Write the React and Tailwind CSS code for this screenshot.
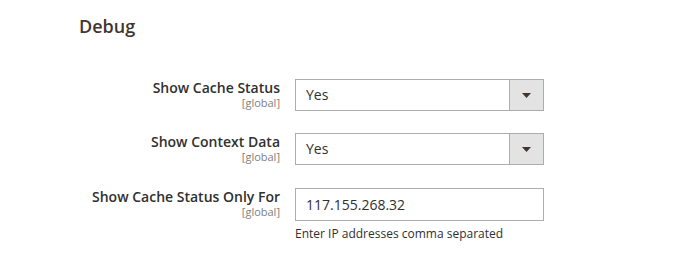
import { useState } from 'react';

const rows = [
  { label: 'Show Cache Status', type: 'select', value: 'Yes' },
  { label: 'Show Context Data', type: 'select', value: 'Yes' },
  { label: 'Show Cache Status Only For', type: 'text', value: '117.155.268.32', note: 'Enter IP addresses comma separated' },
];

function SelectBox({ value }) {
  return (
    <div className="flex h-[32px] w-[249px] border border-[#adadad] bg-white">
      <div className="flex-1 pl-[10px] text-[14px] leading-[30px] text-[#303030]">{value}</div>
      <div className="flex w-[34px] items-center justify-center border-l border-[#adadad] bg-[#e3e3e3]">
        <svg width="9" height="5" viewBox="0 0 9 5">
          <path d="M0 0h9L4.5 5z" fill="#41362f" />
        </svg>
      </div>
    </div>
  );
}

export default function App() {
  const [ips, setIps] = useState('117.155.268.32');

  return (
    <div className="h-[265px] w-[685px] bg-white" style={{ fontFamily: '"Open Sans", sans-serif' }}>
      <h2 className="pl-[79px] pt-[14px] text-[18px] font-semibold leading-[24px] text-[#41362f]">Debug</h2>

      <div className="mt-[41px] flex flex-col gap-[22px]">
        {rows.map((row) => (
          <div key={row.label} className={row.type === 'text' ? 'mt-[1px] flex' : 'flex'}>
            <div className="w-[280px] text-right">
              <div className="text-[14px] font-semibold leading-[18px] text-[#303030]">{row.label}</div>
              <div className="text-[11px] leading-[12px] text-[#808080]">[global]</div>
            </div>
            <div className="ml-[15px]">
              {row.type === 'select' ? (
                <SelectBox value={row.value} />
              ) : (
                <>
                  <input
                    value={ips}
                    onChange={(e) => setIps(e.target.value)}
                    className="block h-[33px] w-[249px] border border-[#adadad] bg-white pl-[10px] text-[14px] text-[#303030] outline-none"
                  />
                  <div className="mt-[4px] text-[12px] leading-[18px] text-[#303030]">{row.note}</div>
                </>
              )}
            </div>
          </div>
        ))}
      </div>
    </div>
  );
}
